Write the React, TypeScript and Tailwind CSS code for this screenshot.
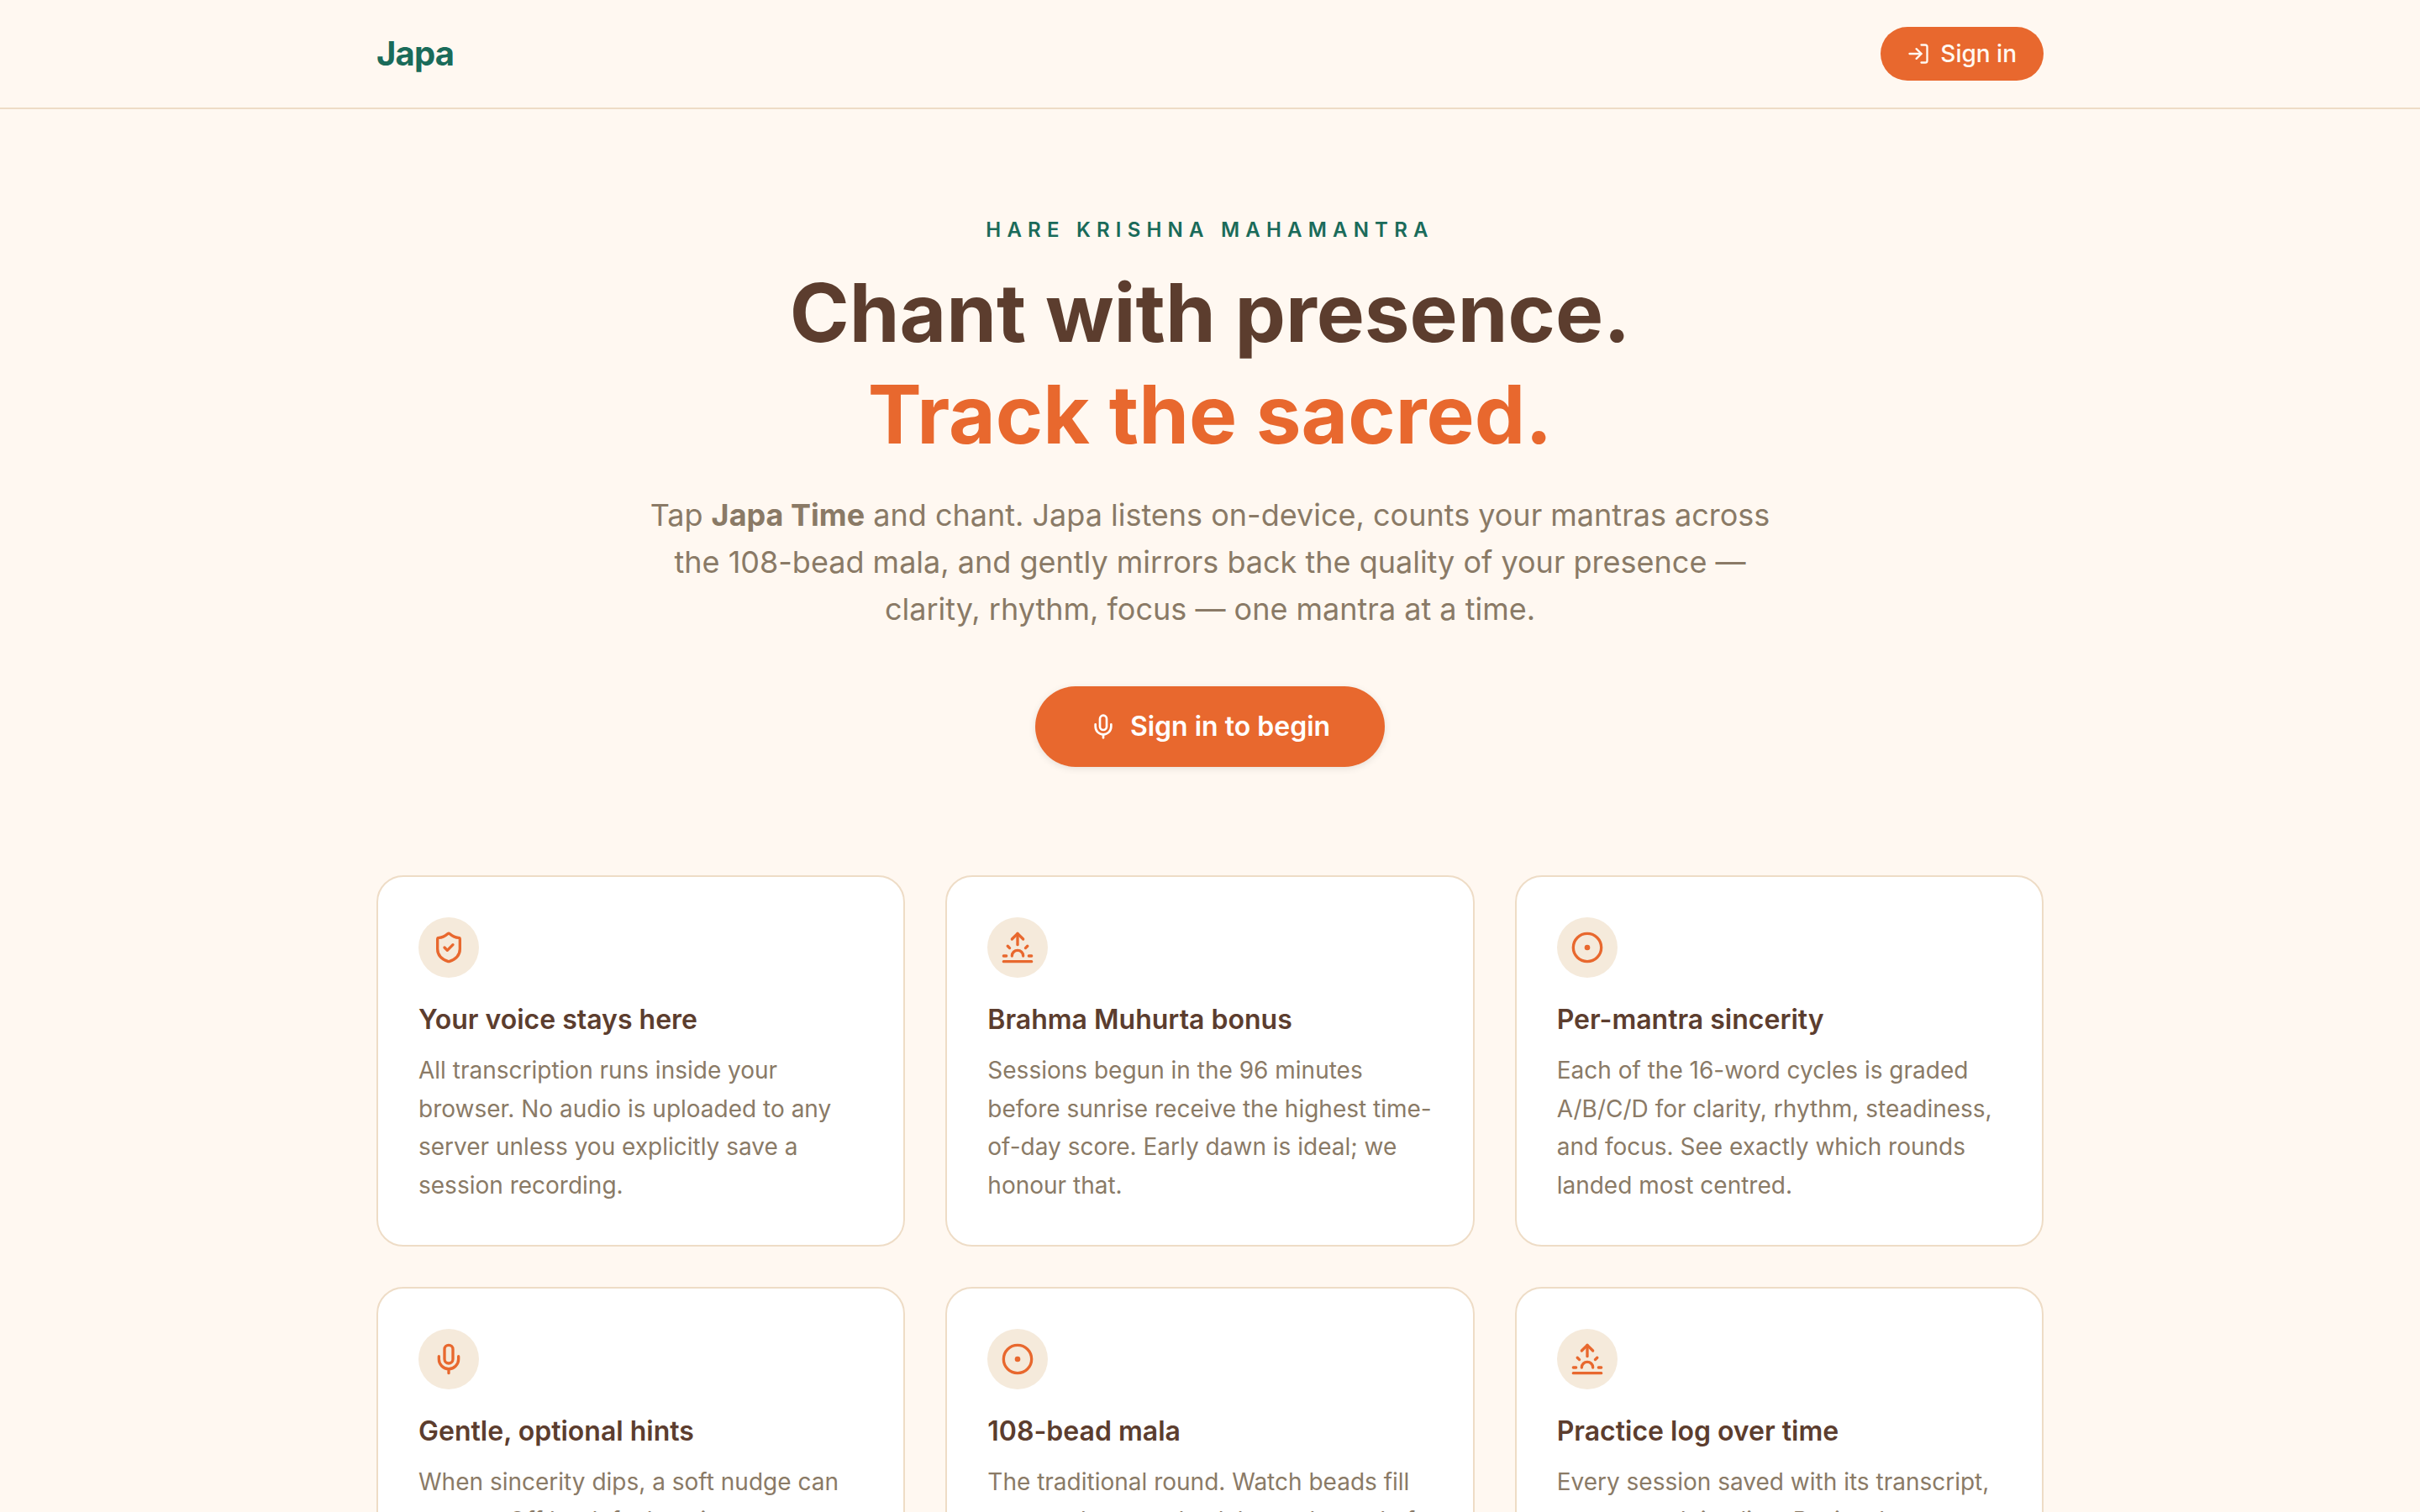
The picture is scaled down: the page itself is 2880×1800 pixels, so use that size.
import { LogIn, Mic, ShieldCheck, Sunrise, CircleDot } from "lucide-react";
import type { ReactNode } from "react";

const features: { icon: ReactNode; title: string; body: string }[] = [
  {
    icon: <ShieldCheck className="w-10 h-10" strokeWidth={2} />,
    title: "Your voice stays here",
    body: "All transcription runs inside your browser. No audio is uploaded to any server unless you explicitly save a session recording.",
  },
  {
    icon: <Sunrise className="w-10 h-10" strokeWidth={2} />,
    title: "Brahma Muhurta bonus",
    body: "Sessions begun in the 96 minutes before sunrise receive the highest time-of-day score. Early dawn is ideal; we honour that.",
  },
  {
    icon: <CircleDot className="w-10 h-10" strokeWidth={2} />,
    title: "Per-mantra sincerity",
    body: "Each of the 16-word cycles is graded A/B/C/D for clarity, rhythm, steadiness, and focus. See exactly which rounds landed most centred.",
  },
  {
    icon: <Mic className="w-10 h-10" strokeWidth={2} />,
    title: "Gentle, optional hints",
    body: "When sincerity dips, a soft nudge can appear. Off by default so it never interrupts your chanting unless you ask.",
  },
  {
    icon: <CircleDot className="w-10 h-10" strokeWidth={2} />,
    title: "108-bead mala",
    body: "The traditional round. Watch beads fill as you chant, and celebrate the end of each round with a quiet chime.",
  },
  {
    icon: <Sunrise className="w-10 h-10" strokeWidth={2} />,
    title: "Practice log over time",
    body: "Every session saved with its transcript, scores, and timeline. Review how your practice deepens week by week.",
  },
];

const FeatureCard = ({ icon, title, body }: { icon: ReactNode; title: string; body: string }) => (
  <div className="bg-white border-2 border-[#eedcc6] rounded-[32px] p-[48px]">
    <div className="w-[72px] h-[72px] rounded-full bg-[#f5eadb] text-[#e8682e] flex items-center justify-center mb-[24px]">
      {icon}
    </div>
    <h3 className="text-[32px] leading-[52px] font-semibold text-[#5c3d2e] mb-[12px]">{title}</h3>
    <p className="text-[28px] leading-[45.5px] text-[#8a7a66]">{body}</p>
  </div>
);

export default function App() {
  return (
    <div className="h-screen overflow-hidden bg-[#fff8f1] font-['Inter',sans-serif]">
      <header className="border-b-2 border-[#eedcc6]">
        <div className="max-w-[2032px] mx-auto px-[24px] h-[128px] flex items-center justify-between">
          <span className="text-[40px] font-bold text-[#1a6b5a] tracking-[-0.8px]">Japa</span>
          <button className="h-[64px] pl-[31px] pr-[32px] rounded-full bg-[#e8682e] text-[#fff8f1] text-[28px] font-medium flex items-center gap-[12px]">
            <LogIn className="w-7 h-7" strokeWidth={2} />
            Sign in
          </button>
        </div>
      </header>

      <main className="max-w-[2032px] mx-auto px-[24px]">
        <section className="pt-[128px] flex flex-col items-center text-center">
          <p className="text-[24px] leading-[32px] font-semibold tracking-[7.2px] uppercase text-[#1a6b5a] mb-[22px]">
            Hare Krishna Mahamantra
          </p>
          <h1 className="text-[96px] leading-[121px] font-bold text-[#5c3d2e] mb-[32px]">
            Chant with presence.
            <br />
            <span className="text-[#e8682e]">Track the sacred.</span>
          </h1>
          <p className="max-w-[1344px] text-[36px] leading-[55.8px] text-[#8a7a66] mb-[64px]">
            Tap <strong className="font-bold">Japa Time</strong> and chant. Japa listens on-device, counts your mantras across the 108-bead mala, and gently mirrors back the quality of your presence — clarity, rhythm, focus — one mantra at a time.
          </p>
          <button className="h-[96px] px-[65px] rounded-full bg-[#e8682e] text-white text-[32px] font-semibold flex items-center gap-[16px] shadow-[0_2px_8px_rgba(0,0,0,0.1)]">
            <Mic className="w-8 h-8" strokeWidth={2} />
            Sign in to begin
          </button>
        </section>

        <section className="grid grid-cols-3 gap-[48px] mt-[129px]">
          {features.map((f) => (
            <FeatureCard key={f.title} icon={f.icon} title={f.title} body={f.body} />
          ))}
        </section>
      </main>
    </div>
  );
}
